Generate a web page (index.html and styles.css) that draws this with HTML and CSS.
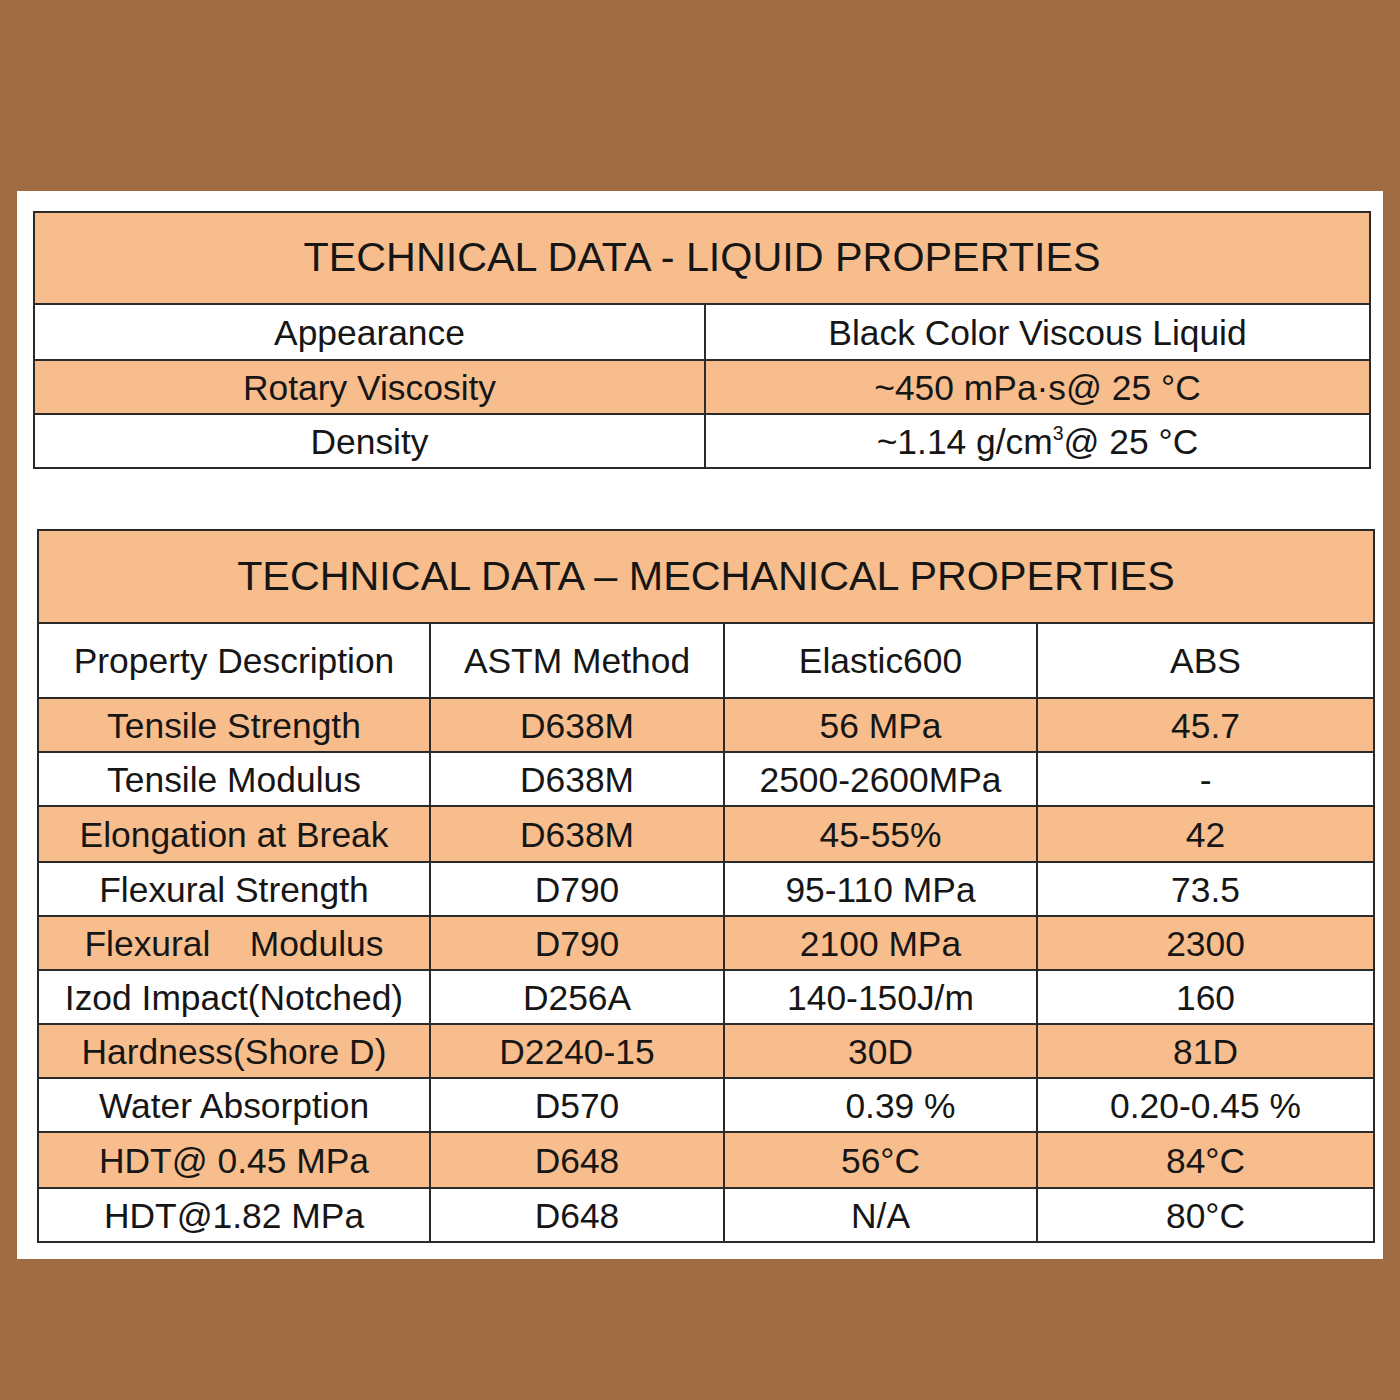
FILE: index.html
```html
<!DOCTYPE html>
<html>
<head>
<meta charset="utf-8">
<link rel="stylesheet" href="styles.css">
</head>
<body>
<div class="panel">
  <table class="tbl tbl-liquid">
    <colgroup><col class="c-l1"><col class="c-l2"></colgroup>
    <tr class="title-row"><td colspan="2">TECHNICAL DATA - LIQUID PROPERTIES</td></tr>
    <tr class="row white r-a"><td>Appearance</td><td>Black Color Viscous Liquid</td></tr>
    <tr class="row peach r-b"><td>Rotary Viscosity</td><td>~450 mPa·s@ 25 °C</td></tr>
    <tr class="row white r-c"><td>Density</td><td>~1.14 g/cm<sup>3</sup>@ 25 °C</td></tr>
  </table>

  <table class="tbl tbl-mech">
    <colgroup><col class="c-m1"><col class="c-m2"><col class="c-m3"><col class="c-m4"></colgroup>
    <tr class="title-row"><td colspan="4">TECHNICAL DATA – MECHANICAL PROPERTIES</td></tr>
    <tr class="head-row white"><td>Property Description</td><td>ASTM Method</td><td>Elastic600</td><td>ABS</td></tr>
    <tr class="row peach"><td>Tensile Strength</td><td>D638M</td><td>56 MPa</td><td>45.7</td></tr>
    <tr class="row white"><td>Tensile Modulus</td><td>D638M</td><td>2500-2600MPa</td><td>-</td></tr>
    <tr class="row peach tall"><td>Elongation at Break</td><td>D638M</td><td>45-55%</td><td>42</td></tr>
    <tr class="row white"><td>Flexural Strength</td><td>D790</td><td>95-110 MPa</td><td>73.5</td></tr>
    <tr class="row peach"><td>Flexural&nbsp;&nbsp;&nbsp; Modulus</td><td>D790</td><td>2100 MPa</td><td>2300</td></tr>
    <tr class="row white"><td>Izod Impact(Notched)</td><td>D256A</td><td>140-150J/m</td><td>160</td></tr>
    <tr class="row peach"><td>Hardness(Shore D)</td><td>D2240-15</td><td>30D</td><td>81D</td></tr>
    <tr class="row white"><td>Water Absorption</td><td>D570</td><td class="shift">0.39 %</td><td>0.20-0.45 %</td></tr>
    <tr class="row peach tall"><td>HDT@ 0.45 MPa</td><td>D648</td><td>56°C</td><td>84°C</td></tr>
    <tr class="row white"><td>HDT@1.82 MPa</td><td>D648</td><td>N/A</td><td>80°C</td></tr>
  </table>
</div>
</body>
</html>
```

FILE: styles.css
```css
html, body {
  margin: 0;
  padding: 0;
  background: #9e6b42;
}

body {
  width: 1400px;
  height: 1400px;
  overflow: hidden;
  font-family: "Liberation Sans", Arial, sans-serif;
  color: #161616;
}

.panel {
  margin: 191px 0 0 17px;
  width: 1366px;
  height: 1068px;
  box-sizing: border-box;
  background: #ffffff;
  padding: 20px 0 0 16px;
  display: flex;
  flex-direction: column;
  gap: 60px;
}

.tbl {
  border-collapse: collapse;
  table-layout: fixed;
  width: 1336px;
}

.tbl td {
  border: 2px solid #2b2a29;
  text-align: center;
  vertical-align: middle;
  padding: 0;
  white-space: nowrap;
  font-size: 35.4px;
  line-height: 1;
}

.tbl-mech {
  margin-left: 4px;
}

.c-l1 { width: 671px; }
.c-l2 { width: 665px; }

.c-m1 { width: 392px; }
.c-m2 { width: 294px; }
.c-m3 { width: 313px; }
.c-m4 { width: 337px; }

.title-row td {
  background: #f8bd8c;
  font-size: 41.3px;
  height: 91px;
}

.tbl-liquid .title-row td {
  height: 90px;
}

.head-row td {
  height: 71px;
  padding-top: 2px;
}

.row td {
  height: 49px;
  padding-top: 3px;
}

.tbl-liquid .r-a td { height: 51px; }
.tbl-liquid .r-b td { height: 49px; }
.tbl-liquid .r-c td { height: 49px; }

.row.tall td {
  height: 51px;
}

.peach td {
  background: #f8bd8c;
}

.white td {
  background: #ffffff;
}

.shift {
  padding-left: 40px !important;
}

sup {
  font-size: 0.55em;
  vertical-align: 0.7em;
  line-height: 0;
}
```
